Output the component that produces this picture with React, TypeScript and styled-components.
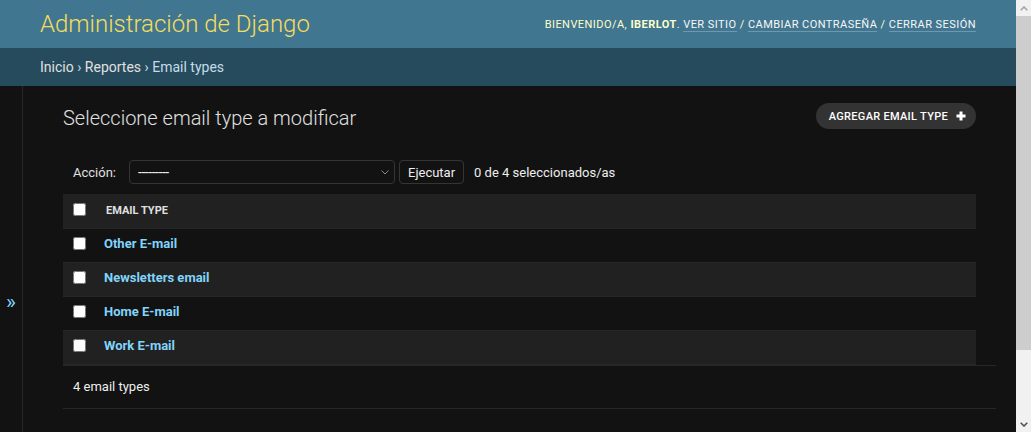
import styled, { createGlobalStyle } from "styled-components";

const GlobalStyle = createGlobalStyle`
  body {
    margin: 0;
    background: #121212;
    color: #eeeeee;
    font-family: Roboto, "Liberation Sans", Arial, sans-serif;
    font-size: 14px;
  }
`;

const Shell = styled.div`
  display: flex;
  align-items: flex-start;
`;
const Page = styled.div`
  flex: 1;
  min-width: 0;
`;

// the browser scrollbar the reference shows on the right
const Scrollbar = styled.div`
  flex: 0 0 15px;
  position: sticky;
  top: 0;
  height: 100vh;
  display: flex;
  flex-direction: column;
  background: #f1f1f1;
`;
const ScrollArrow = styled.div`
  height: 16px;
  display: flex;
  align-items: center;
  justify-content: center;
`;
const ScrollThumb = styled.div`
  height: 334px;
  background: #cdcdcd;
`;
const ScrollTrack = styled.div`
  flex: 1;
`;

const Header = styled.header`
  height: 48px;
  box-sizing: border-box;
  padding: 0 40px;
  display: flex;
  justify-content: space-between;
  align-items: center;
  background: #417690;
  color: #ffffcc;
`;
const Branding = styled.h1`
  margin: 0;
  font-size: 24px;
  font-weight: 300;
  line-height: 28px;
  color: #f5dd5d;
`;
const UserTools = styled.div`
  font-size: 11px;
  letter-spacing: 0.45px;
  text-transform: uppercase;
  a {
    color: #f7f7f7;
    text-decoration: none;
    border-bottom: 1px solid rgba(255, 255, 255, 0.25);
  }
  strong {
    font-weight: 700;
  }
`;
const Breadcrumbs = styled.nav`
  background: #264b5d;
  padding: 10px 40px;
  font-size: 14px;
  line-height: 18px;
  color: #c4dce8;
  a {
    color: #e0e0e0;
    text-decoration: none;
  }
`;

const Main = styled.div`
  display: flex;
  align-items: flex-start;
`;
const SidebarToggle = styled.button`
  flex: 0 0 23px;
  height: 100vh;
  position: sticky;
  top: 0;
  display: flex;
  align-items: center;
  justify-content: center;
  padding: 0;
  background: transparent;
  border: 0;
  border-right: 1px solid #272727;
  color: #81d4fa;
  font-family: inherit;
  font-size: 21px;
  cursor: pointer;
`;
const Content = styled.div`
  flex: 1;
  min-width: 0;
  padding: 20px 40px;
`;
const TitleRow = styled.div`
  display: flex;
  justify-content: space-between;
  align-items: flex-start;
  margin-bottom: 20px;
`;
const Title = styled.h1`
  margin: 0;
  font-size: 20px;
  font-weight: 300;
  line-height: 24px;
  color: #e0e0e0;
`;
const AddLink = styled.a`
  display: flex;
  align-items: center;
  gap: 8px;
  height: 26px;
  margin-top: -3px;
  padding: 0 10px 0 13px;
  border-radius: 15px;
  background: #333333;
  color: #ffffff;
  font-size: 11px;
  font-weight: 500;
  letter-spacing: 0.3px;
  text-transform: uppercase;
  text-decoration: none;
`;

const Actions = styled.div`
  display: flex;
  align-items: center;
  padding: 10px;
  font-size: 13px;
  color: #e0e0e0;
`;
const SelectWrap = styled.div`
  position: relative;
  margin-left: 13px;
`;
const Select = styled.select`
  appearance: none;
  display: block;
  width: 266px;
  height: 24px;
  padding: 0 0 0 8px;
  background: #121212;
  color: #eeeeee;
  border: 1px solid #353535;
  border-radius: 4px;
  font-family: inherit;
  font-size: 14px;
  letter-spacing: -0.45px;
`;
const Chevron = styled.svg`
  position: absolute;
  right: 6px;
  top: 10px;
  pointer-events: none;
`;
const RunButton = styled.button`
  height: 24px;
  margin-left: 4px;
  padding: 0 8px;
  background: #121212;
  color: #eeeeee;
  border: 1px solid #353535;
  border-radius: 4px;
  font-family: inherit;
  font-size: 13px;
  cursor: pointer;
`;
const Counter = styled.span`
  margin-left: 10px;
  color: #eeeeee;
`;

const Table = styled.table`
  width: 100%;
  table-layout: fixed;
  border-collapse: collapse;
  font-size: 13px;
`;
const CheckCol = styled.col`
  width: 33px;
`;
const Row = styled.tr<{ $striped?: boolean }>`
  height: 34px;
  background: ${(p) => (p.$striped ? "#212121" : "#121212")};
  border-bottom: 1px solid #272727;
`;
const CheckCell = styled.td<{ $lift: number }>`
  padding: 0 0 ${(p) => p.$lift}px 10px;
  vertical-align: middle;
  input {
    display: block;
    margin: 0;
    width: 13px;
    height: 13px;
  }
`;
const HeadCell = styled.th`
  padding: 0 10px;
  text-align: left;
  font-size: 11px;
  font-weight: 700;
  text-transform: uppercase;
  color: #e0e0e0;
`;
const NameCell = styled.th`
  padding: 0 8px 4px;
  text-align: left;
  a {
    color: #81d4fa;
    font-weight: 700;
    text-decoration: none;
  }
`;
const Paginator = styled.p`
  margin: 0 -20px 0 0;
  padding: 10px;
  line-height: 22px;
  font-size: 13px;
  color: #eeeeee;
  border-top: 1px solid #272727;
  border-bottom: 1px solid #272727;
`;

const emailTypes = ["Other E-mail", "Newsletters email", "Home E-mail", "Work E-mail"];

export default function App() {
  return (
    <Shell>
      <GlobalStyle />
      <Page>
        <Header>
          <Branding>Administración de Django</Branding>
          <UserTools>
            Bienvenido/a, <strong>iberlot</strong>. <a href="#">Ver sitio</a> /{" "}
            <a href="#">Cambiar contraseña</a> / <a href="#">Cerrar sesión</a>
          </UserTools>
        </Header>
        <Breadcrumbs>
          <a href="#">Inicio</a> › <a href="#">Reportes</a> › Email types
        </Breadcrumbs>
        <Main>
          <SidebarToggle>»</SidebarToggle>
          <Content>
            <TitleRow>
              <Title>Seleccione email type a modificar</Title>
              <AddLink href="#">
                Agregar email type
                <svg width="10" height="10" viewBox="0 0 10 10">
                  <path d="M5 0.5v9M0.5 5h9" stroke="#fff" strokeWidth="3" />
                </svg>
              </AddLink>
            </TitleRow>
            <Actions>
              <label>Acción:</label>
              <SelectWrap>
                <Select defaultValue="">
                  <option value="">---------</option>
                  <option value="delete">Eliminar email types seleccionado/s</option>
                </Select>
                <Chevron width="8" height="5" viewBox="0 0 8 5">
                  <path d="M0.5 0.5l3.5 3.5 3.5-3.5" fill="none" stroke="#8a8a8a" strokeWidth="1" />
                </Chevron>
              </SelectWrap>
              <RunButton>Ejecutar</RunButton>
              <Counter>0 de 4 seleccionados/as</Counter>
            </Actions>
            <Table>
              <colgroup>
                <CheckCol />
                <col />
              </colgroup>
              <thead>
                <Row $striped>
                  <CheckCell as="th" $lift={3}>
                    <input type="checkbox" />
                  </CheckCell>
                  <HeadCell>Email type</HeadCell>
                </Row>
              </thead>
              <tbody>
                {emailTypes.map((name, i) => (
                  <Row key={name} $striped={i % 2 === 1}>
                    <CheckCell $lift={4}>
                      <input type="checkbox" />
                    </CheckCell>
                    <NameCell>
                      <a href="#">{name}</a>
                    </NameCell>
                  </Row>
                ))}
              </tbody>
            </Table>
            <Paginator>4 email types</Paginator>
          </Content>
        </Main>
      </Page>
      <Scrollbar>
        <ScrollArrow>
          <svg width="8" height="5" viewBox="0 0 8 5">
            <path d="M0.7 4.3L4 1l3.3 3.3" fill="none" stroke="#a3a3a3" strokeWidth="1.6" />
          </svg>
        </ScrollArrow>
        <ScrollThumb />
        <ScrollTrack />
        <ScrollArrow>
          <svg width="8" height="5" viewBox="0 0 8 5">
            <path d="M0.7 0.7L4 4l3.3-3.3" fill="none" stroke="#505050" strokeWidth="1.6" />
          </svg>
        </ScrollArrow>
      </Scrollbar>
    </Shell>
  );
}
